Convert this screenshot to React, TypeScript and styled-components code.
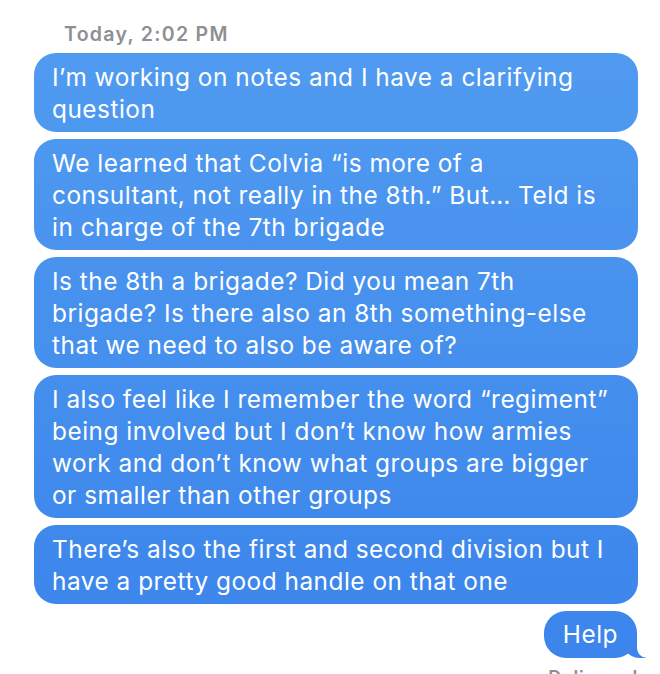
import React from "react";
import styled, { createGlobalStyle } from "styled-components";

const Global = createGlobalStyle`
  html, body { margin: 0; padding: 0; background: #ffffff; }
  body { font-family: Inter, "Open Sans", "Liberation Sans", sans-serif; -webkit-font-smoothing: antialiased; }
`;

const Thread = styled.div`
  width: 660px;
  height: 674px;
  overflow: hidden;
  box-sizing: border-box;
  padding: 21px 22px 0 34px;
  display: flex;
  flex-direction: column;
`;

const Stamp = styled.div`
  margin-left: 30px;
  font-size: 19.5px;
  line-height: 26px;
  font-weight: 600;
  color: #8e8e93;
  letter-spacing: 1.3px;
  margin-bottom: 6px;
`;

const Bubble = styled.div<{ $mine?: boolean }>`
  position: relative;
  box-sizing: border-box;
  align-self: ${(p) => (p.$mine ? "flex-end" : "stretch")};
  padding: ${(p) => (p.$mine ? "7px 19px 8px 19px" : "8px 18px 7px 18px")};
  margin-bottom: 7px;
  border-radius: 22px;
  background: linear-gradient(180deg, #529df1 0%, #4690ee 50%, #3a84ec 100%);
  background-attachment: fixed;
  color: #ffffff;
  font-size: 24.4px;
  line-height: 32px;
  letter-spacing: 0.5px;
  white-space: pre-line;

  ${(p) =>
    p.$mine &&
    `
    margin-right: 1px;
    &::before {
      content: "";
      position: absolute;
      bottom: 0;
      right: -9px;
      width: 22px;
      height: 22px;
      background: inherit;
      background-attachment: fixed;
      border-bottom-left-radius: 16px 14px;
      z-index: 0;
    }
    &::after {
      content: "";
      position: absolute;
      bottom: 0;
      right: -12px;
      width: 12px;
      height: 24px;
      background: #ffffff;
      border-bottom-left-radius: 10px;
      z-index: 1;
    }
  `}
`;

const BubbleText = styled.span`
  position: relative;
  z-index: 2;
`;

const Status = styled.div`
  align-self: flex-end;
  font-size: 18px;
  font-weight: 600;
  color: #8e8e93;
  line-height: 20px;
  letter-spacing: 0.8px;
  margin-top: 3px;
`;

const messages = [
  "I’m working on notes and I have a clarifying\nquestion",
  "We learned that Colvia “is more of a\nconsultant, not really in the 8th.” But… Teld is\nin charge of the 7th brigade",
  "Is the 8th a brigade? Did you mean 7th\nbrigade? Is there also an 8th something-else\nthat we need to also be aware of?",
  "I also feel like I remember the word “regiment”\nbeing involved but I don’t know how armies\nwork and don’t know what groups are bigger\nor smaller than other groups",
  "There’s also the first and second division but I\nhave a pretty good handle on that one",
];

export default function App() {
  return (
    <>
      <Global />
      <Thread>
        <Stamp>Today, 2:02 PM</Stamp>
        {messages.map((m, i) => (
          <Bubble key={i}>
            <BubbleText>{m}</BubbleText>
          </Bubble>
        ))}
        <Bubble $mine>
          <BubbleText>Help</BubbleText>
        </Bubble>
        <Status>Delivered</Status>
      </Thread>
    </>
  );
}
